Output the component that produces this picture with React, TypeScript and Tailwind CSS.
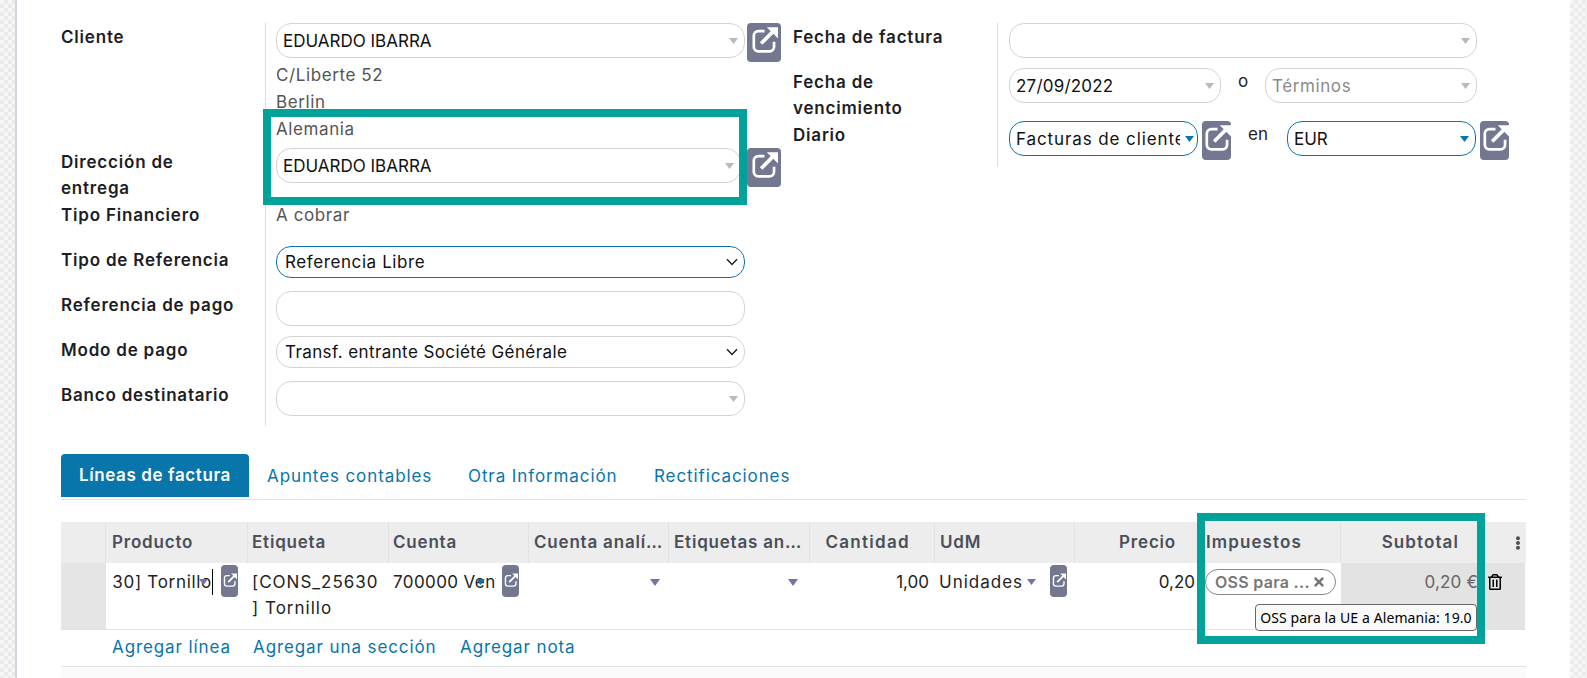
import { FaEllipsisV, FaRegTrashAlt, FaTimes } from "react-icons/fa";

const font = { fontFamily: "Inter, 'Noto Sans', sans-serif" };

function LinkIcon({ size = 24 }: { size?: number }) {
  return (
    <svg width={size} height={size} viewBox="0 0 24 24" fill="none" className="shrink-0">
      <path d="M12 4.5H6.5a4 4 0 0 0-4 4v10a4 4 0 0 0 4 4h10a4 4 0 0 0 4-4V14" stroke="white" strokeWidth="2.4" />
      <path d="M9 15.5 19.5 5" stroke="white" strokeWidth="3.2" />
      <path d="M14 1h10v10z" fill="white" />
    </svg>
  );
}

function OpenButton({ className }: { className: string }) {
  return (
    <div className={`flex items-start overflow-hidden rounded-[4px] bg-[#737790] ${className}`}>
      <div className="mt-[3px]">
        <LinkIcon size={27} />
      </div>
    </div>
  );
}

function TinyButton() {
  return (
    <div className="flex h-[32px] w-[17px] shrink-0 justify-center rounded-[4px] bg-[#737790] pt-[8px]">
      <LinkIcon size={14} />
    </div>
  );
}

function Caret({ color = "#b9b9b9", w = 9, h = 6 }: { color?: string; w?: number; h?: number }) {
  return (
    <svg width={w} height={h} viewBox="0 0 10 6" preserveAspectRatio="none" className="shrink-0">
      <path d="M0 0h10L5 6z" fill={color} />
    </svg>
  );
}

function Chevron() {
  return (
    <svg width="12" height="8" viewBox="0 0 12 8" fill="none" className="shrink-0">
      <path d="M1 1.2 6 6.4l5-5.2" stroke="#222" strokeWidth="1.5" />
    </svg>
  );
}

function Field({
  text,
  width,
  height = "h-[35px]",
  border = "border-[#d4d4d4]",
  caret = "#b9b9b9",
  tone = "text-[#111]",
  track = "tracking-[0.6px]",
  inset = "pl-[6px] pr-[6px]",
  chevron = false,
}: {
  text?: string;
  width: string;
  height?: string;
  border?: string;
  caret?: string | null;
  tone?: string;
  track?: string;
  inset?: string;
  chevron?: boolean;
}) {
  return (
    <div className={`flex shrink-0 items-center gap-[5px] rounded-[15px] border bg-white ${inset} ${width} ${height} ${border}`}>
      <span className={`flex-1 overflow-hidden whitespace-nowrap pt-[2px] text-[17px] ${track} ${tone}`}>{text}</span>
      {chevron ? <Chevron /> : caret ? <Caret color={caret} /> : null}
    </div>
  );
}

function Row({
  h,
  label,
  pad = "pl-[10px]",
  children,
}: {
  h: string;
  label: React.ReactNode;
  pad?: string;
  children?: React.ReactNode;
}) {
  return (
    <div className={`flex ${h}`}>
      <div className="w-[204px] shrink-0 pt-px text-[17px] font-semibold leading-[26px] tracking-[0.8px] text-[#1d1d26]">{label}</div>
      <div className={`flex-1 border-l border-[#dcdcdc] ${pad}`}>{children}</div>
    </div>
  );
}

const gridCols = "grid grid-cols-[45px_142px_141px_140px_140px_141px_125px_140px_123px_143px_140px_44px]";

function Th({ children, right, pad = "pl-[6px]" }: { children?: React.ReactNode; right?: string; pad?: string }) {
  return (
    <div className={`flex h-full items-center overflow-hidden whitespace-nowrap border-r border-[#e2e2e2] text-[17px] font-semibold tracking-[0.8px] text-[#4a4f59] ${pad} ${right ?? ""}`}>
      {children}
    </div>
  );
}

export default function App() {
  return (
    <div className="relative flex h-[678px] overflow-hidden bg-white" style={font}>
      <div className="w-[15px] shrink-0 bg-[#f0f0f0] bg-[repeating-conic-gradient(#ebebeb_0%_25%,#f6f6f6_0%_50%)] bg-[length:8px_8px]" />
      <main className="min-w-0 flex-1 border-l-2 border-[#d3d3e2] pl-[44px] pt-[23px]">
        <div className="flex h-[403px]">
          <div className="w-[732px] shrink-0">
            <Row h="h-[125px]" label="Cliente">
              <div className="flex h-[39px] items-start">
                <Field text="EDUARDO IBARRA" width="w-[469px]" track="tracking-[0px]" />
                <OpenButton className="ml-[2px] h-[39px] w-[34px] pl-[4px]" />
              </div>
              <div className="text-[17px] leading-[27px] tracking-[0.6px] text-[#555]">
                <div>C/Liberte 52</div>
                <div>Berlin</div>
                <div>Alemania</div>
              </div>
            </Row>
            <Row
              h="h-[53px]"
              label={
                <>
                  Dirección de
                  <br />
                  entrega
                </>
              }
            >
              <div className="flex items-start">
                <Field text="EDUARDO IBARRA" width="w-[465px]" track="tracking-[0px]" />
                <OpenButton className="ml-[6px] h-[39px] w-[34px] pl-[4px]" />
              </div>
            </Row>
            <Row h="h-[45px]" label="Tipo Financiero">
              <div className="pt-px text-[17px] leading-[27px] tracking-[0.6px] text-[#555]">A cobrar</div>
            </Row>
            <Row h="h-[45px]" label="Tipo de Referencia">
              <Field text="Referencia Libre" width="w-[469px]" height="h-[32px]" border="border-[#0875ab]" inset="pl-[8px] pr-[6px]" chevron />
            </Row>
            <Row h="h-[45px]" label="Referencia de pago">
              <Field width="w-[469px]" caret={null} />
            </Row>
            <Row h="h-[45px]" label="Modo de pago">
              <Field text="Transf. entrante Société Générale" width="w-[469px]" height="h-[32px]" track="tracking-[0.4px]" inset="pl-[8px] pr-[6px]" chevron />
            </Row>
            <Row h="h-[45px]" label="Banco destinatario">
              <Field width="w-[469px]" />
            </Row>
          </div>
          <div className="w-[715px] shrink-0">
            <Row h="h-[45px]" label="Fecha de factura" pad="pl-[11px]">
              <Field width="w-[468px]" />
            </Row>
            <Row
              h="h-[53px]"
              pad="pl-[11px]"
              label={
                <>
                  Fecha de
                  <br />
                  vencimiento
                </>
              }
            >
              <div className="flex items-start">
                <Field text="27/09/2022" width="w-[212px]" track="tracking-[0.2px]" />
                <span className="w-[44px] text-center text-[17px] leading-[27px] text-[#222]">o</span>
                <Field text="Términos" width="w-[212px]" tone="text-[#8a8a8a]" />
              </div>
            </Row>
            <Row h="h-[46px]" label="Diario" pad="pl-[11px]">
              <div className="flex items-start">
                <Field text="Facturas de cliente" width="w-[189px]" border="border-[#0875ab]" caret="#0875ab" track="tracking-[0.9px]" inset="pl-[6px] pr-[3px]" />
                <OpenButton className="ml-[4px] h-[39px] w-[29px] pl-[2px]" />
                <span className="ml-[17px] w-[39px] text-[17px] leading-[27px] text-[#222]">en</span>
                <Field text="EUR" width="w-[189px]" border="border-[#0875ab]" caret="#0875ab" track="tracking-[0px]" />
                <OpenButton className="ml-[4px] h-[39px] w-[29px] pl-[2px]" />
              </div>
            </Row>
          </div>
        </div>

        <div className="mt-[28px] flex h-[46px] w-[1465px] items-start border-b border-[#e2e2e2] text-[17px] tracking-[0.9px] text-[#0875ab]">
          <div className="flex h-[43px] w-[188px] items-center justify-center rounded-t-[4px] bg-[#0875ab] font-semibold tracking-[0.6px] text-white">Líneas de factura</div>
          <div className="flex h-[46px] w-[201px] items-center pl-[18px]">Apuntes contables</div>
          <div className="flex h-[46px] w-[186px] items-center pl-[18px]">Otra Información</div>
          <div className="flex h-[46px] items-center pl-[18px]">Rectificaciones</div>
        </div>

        <div className="mt-[22px] w-[1465px]">
          <div className={`${gridCols} h-[41px] bg-[#ededed]`}>
            <Th />
            <Th>Producto</Th>
            <Th pad="pl-[4px]">Etiqueta</Th>
            <Th pad="pl-[4px]">Cuenta</Th>
            <Th pad="pl-[5px]" right="pr-[4px]">
              <span className="overflow-hidden text-ellipsis">Cuenta analítica</span>
            </Th>
            <Th pad="pl-[5px]" right="pr-[4px]">
              <span className="overflow-hidden text-ellipsis">Etiquetas analíticas</span>
            </Th>
            <Th right="justify-end pr-[24px]">
              <span className="tracking-[1.3px]">Cantidad</span>
            </Th>
            <Th pad="pl-[5px]">UdM</Th>
            <Th right="justify-end pr-[21px]">Precio</Th>
            <Th>
              <span className="pl-[2px] tracking-[1.1px]">Impuestos</span>
            </Th>
            <Th right="justify-end pr-[21px]">
              <span className="tracking-[1.1px]">Subtotal</span>
            </Th>
            <div className="flex h-full items-center justify-center pl-[30px] text-[#4a4f59]">
              <FaEllipsisV size={14} />
            </div>
          </div>

          <div className={`${gridCols} h-[67px] border-b border-[#e2e2e2] text-[17px] leading-[26px] tracking-[1px] text-[#222]`}>
            <div className="bg-[#e5e5e5]" />
            <div className="relative flex items-start pl-[6px] pt-[2px]">
              <div className="mt-[4px] flex w-[101px] justify-end overflow-hidden whitespace-nowrap border-r border-black tracking-[0.7px]">[CONS_25630] Tornillo</div>
              <div className="absolute left-[93px] top-[16px]">
                <Caret color="#7b6fa5" />
              </div>
              <div className="ml-[8px]">
                <TinyButton />
              </div>
            </div>
            <div className="pl-[4px] pt-[6px]">
              [CONS_25630
              <br />] Tornillo
            </div>
            <div className="relative flex items-start pl-[4px] pt-[2px]">
              <div className="mt-[4px] w-[103px] overflow-hidden whitespace-nowrap tracking-[0.4px]">700000 Ventas</div>
              <div className="absolute left-[87px] top-[16px]">
                <Caret color="#0875ab" />
              </div>
              <div className="ml-[6px]">
                <TinyButton />
              </div>
            </div>
            <div className="flex items-start justify-end pr-[9px] pt-[16px]">
              <Caret color="#7b6fa5" w={10} h={7} />
            </div>
            <div className="flex items-start justify-end pr-[12px] pt-[16px]">
              <Caret color="#7b6fa5" w={10} h={7} />
            </div>
            <div className="pr-[6px] pt-[6px] text-right tracking-[0px]">1,00</div>
            <div className="flex items-start pl-[4px] pt-[2px]">
              <span className="mt-[4px]">Unidades</span>
              <span className="ml-[4px] mt-[14px]">
                <Caret color="#7b6fa5" />
              </span>
              <div className="ml-[14px]">
                <TinyButton />
              </div>
            </div>
            <div className="pr-[3px] pt-[6px] text-right tracking-[0px]">0,20</div>
            <div className="pl-[7px] pt-[6px]">
              <div className="flex h-[26px] w-[131px] items-center justify-between rounded-full border border-[#888] pl-[9px] pr-[9px] text-[16px] font-semibold tracking-[0.3px] text-[#777]">
                <span>OSS para ...</span>
                <FaTimes size={14} />
              </div>
            </div>
            <div className="bg-[#e3e3e3] pr-[3px] pt-[6px] text-right tracking-[0.2px] text-[#666]">0,20 €</div>
            <div className="bg-[#e3e3e3] pl-[6px] pt-[11px] text-black">
              <FaRegTrashAlt size={16} />
            </div>
          </div>

          <div className="flex h-[37px] items-center border-b border-[#e2e2e2] pl-[51px] text-[17px] tracking-[0.9px] text-[#0875ab]">
            <span className="w-[141px]">Agregar línea</span>
            <span className="w-[207px]">Agregar una sección</span>
            <span>Agregar nota</span>
          </div>
          <div className="h-[12px] bg-[#fafafa]" />
        </div>
      </main>
      <div className="w-[17px] shrink-0 bg-[#f0f0f0] bg-[repeating-conic-gradient(#ebebeb_0%_25%,#f6f6f6_0%_50%)] bg-[length:8px_8px]" />

      <div className="pointer-events-none absolute left-[263px] top-[109px] h-[96px] w-[484px] border-8 border-[#02a29a]" />
      <div className="pointer-events-none absolute left-[1197px] top-[513px] h-[131px] w-[288px] border-8 border-[#02a29a]" />
      <div className="absolute left-[1255px] top-[604px] flex h-[27px] w-[222px] items-center justify-center rounded-[4px] border border-[#666] bg-[#fafafa] text-[14px] tracking-[0.1px] text-black" style={{ fontFamily: "'Noto Sans', sans-serif" }}>
        OSS para la UE a Alemania: 19.0
      </div>
    </div>
  );
}
